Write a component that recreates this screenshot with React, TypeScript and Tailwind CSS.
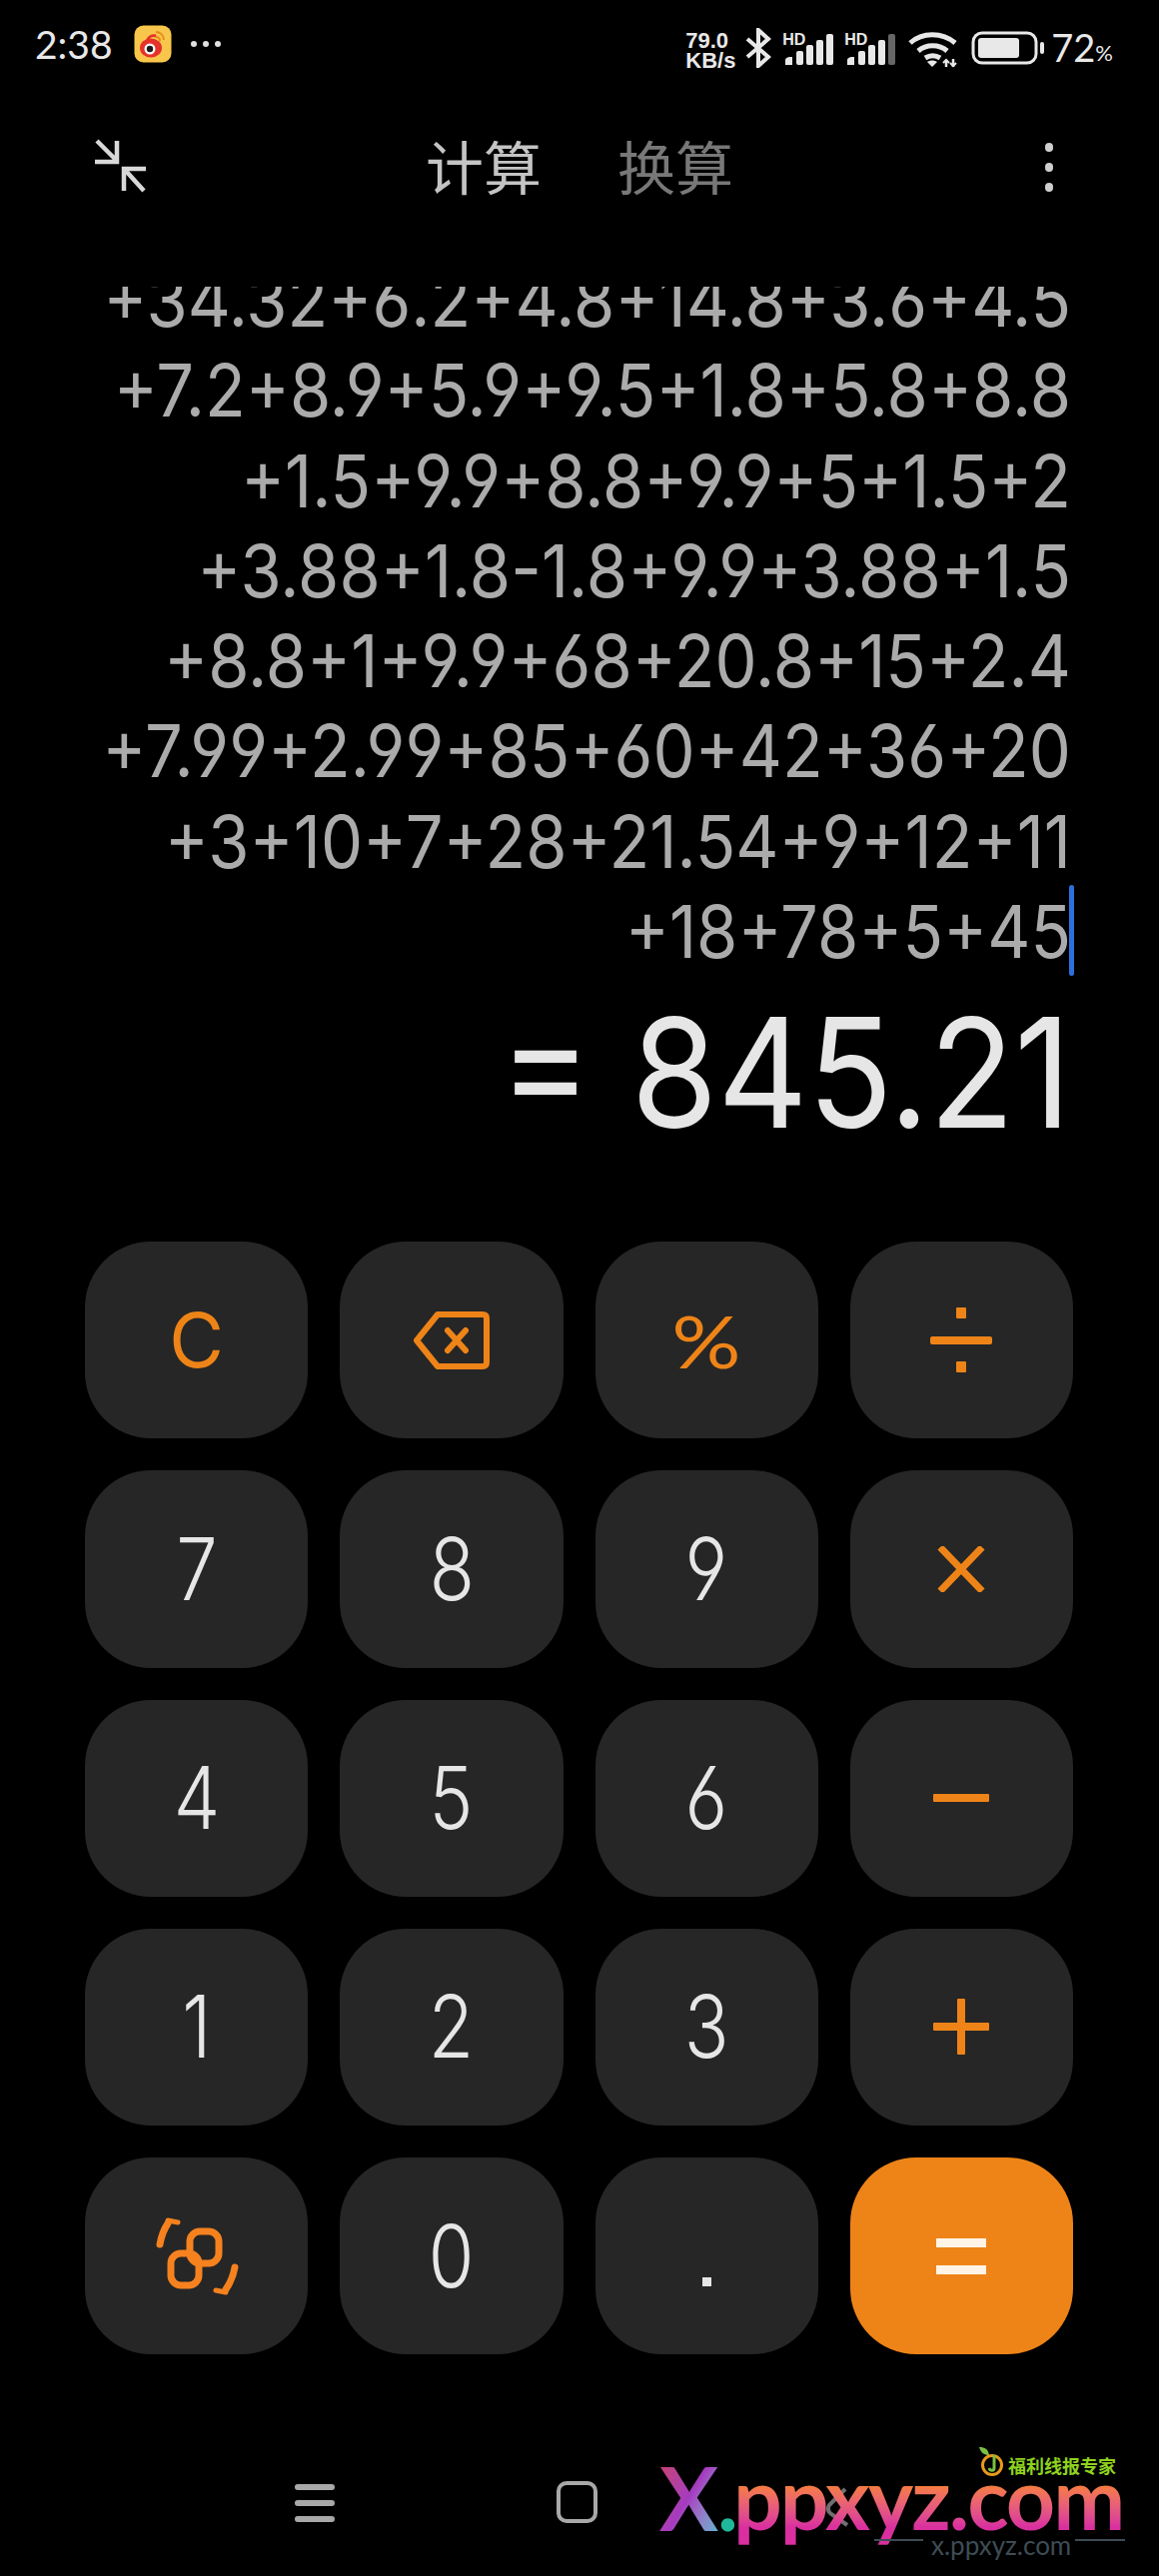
import React from "react";

const FONT = "font-['Lato','Noto_Sans',sans-serif]";
const NUM = "font-['Inter','Roboto',sans-serif] [font-feature-settings:'cv03','cv04']";

function Weibo() {
  return (
    <svg width="38" height="38" viewBox="0 0 38 38" className="ml-[19px]">
      <rect x="0.5" y="0.5" width="37" height="37" rx="9" fill="#f8c64b" />
      <ellipse cx="17" cy="23" rx="11" ry="9.5" fill="#e5322b" />
      <path d="M13 16c2-5 6-6 9-5" stroke="#e5322b" strokeWidth="3" fill="none" />
      <circle cx="16" cy="24" r="5.5" fill="#fff" />
      <circle cx="16" cy="24" r="3.2" fill="#1a1a1a" />
      <path d="M22 7c4 0 8 3 8 8" stroke="#e98a1d" strokeWidth="2" fill="none" />
      <path d="M22 12c2 0 4 1 4 4" stroke="#e98a1d" strokeWidth="2" fill="none" />
    </svg>
  );
}

function Signal({ dim }: { dim?: boolean }) {
  return (
    <div className="relative w-[52px] h-[44px]">
      <span className="absolute left-0 top-[11px] text-[16px] leading-[13px] font-bold text-[#e8e8e8] font-['Liberation_Sans',sans-serif]">HD</span>
      <svg width="52" height="44" viewBox="0 0 52 44" className="absolute left-0 top-0" fill="#e8e8e8">
        <path d="M3 43v-5q0-2 4-3h3v8z" />
        <rect x="14" y="29" width="7" height="14" rx="2" />
        <rect x="24" y="23" width="7" height="20" rx="2" />
        <rect x="34" y="18" width="7" height="25" rx="2" />
        <rect x="44" y="12" width="7" height="31" rx="2" fill={dim ? "#666666" : "#e8e8e8"} />
      </svg>
    </div>
  );
}

function StatusBar() {
  return (
    <div className={`h-[88px] flex items-center pl-[35px] pr-[46px] text-[#e8e8e8] ${FONT}`}>
      <span className="text-[39px] leading-none font-normal w-[80px]">2:38</span>
      <Weibo />
      <svg width="32" height="8" viewBox="0 0 32 8" className="ml-[18px]" fill="#e0e0e0">
        <circle cx="4" cy="4" r="3" />
        <circle cx="16" cy="4" r="3" />
        <circle cx="28" cy="4" r="3" />
      </svg>
      <div className="ml-auto flex items-center">
        <div className="flex flex-col w-[52px] text-[22px] leading-[20px] font-bold mt-[14px] font-['Liberation_Sans',sans-serif]">
          <span>79.0</span>
          <span>KB/s</span>
        </div>
        <svg width="26" height="40" viewBox="0 0 26 40" className="ml-[8px] mt-[8px]" fill="none" stroke="#e8e8e8" strokeWidth="4">
          <path d="M2 11l21 18-10 9V2l10 9L2 29" />
        </svg>
        <div className="ml-[11px]"><Signal /></div>
        <div className="ml-[10px]"><Signal dim /></div>
        <svg width="50" height="36" viewBox="0 0 50 36" className="ml-[12px] mt-[11px]" fill="none" stroke="#e8e8e8" strokeWidth="5">
          <path d="M2 11c12-11 32-11 45 0" />
          <path d="M10 19c8-7 21-7 29 0" />
          <path d="M17 26c5-3 10-3 15 0" />
          <path d="M24 35l-5-5c3-2 7-2 10 0z" fill="#e8e8e8" stroke="none" />
          <path d="M38 35v-7M45 35v-8" strokeWidth="2.5" />
          <path d="M35 31l3-3 3 3M42 31l3 3 3-3" strokeWidth="2" />
        </svg>
        <svg width="74" height="34" viewBox="0 0 74 34" className="ml-[13px] mt-[8px]">
          <rect x="2" y="2" width="63" height="30" rx="9" fill="none" stroke="#e8e8e8" strokeWidth="3" />
          <rect x="7" y="7" width="41" height="20" rx="3" fill="#e8e8e8" />
          <rect x="69" y="11" width="4" height="12" rx="2" fill="#e8e8e8" />
        </svg>
        <span className="ml-[6px] text-[38px] leading-none font-normal mt-[5px]">72</span>
        <span className="text-[22px] leading-none font-normal mt-[18px]">%</span>
      </div>
    </div>
  );
}

function Header() {
  return (
    <div className="h-[160px] px-[95px] flex items-center relative">
      <svg width="52" height="54" viewBox="0 0 52 54" fill="none" stroke="#d8d8d8" strokeWidth="4.5" className="mt-[-5px]">
        <path d="M2 2l20 20M22 2v21H0" />
        <path d="M49 52L30 31M29 52V30h22" />
      </svg>
      <div className="absolute left-[426px] top-[44px] flex gap-[76px] text-[58px] leading-[66px] font-['Noto_Sans_CJK_SC',sans-serif] font-normal">
        <span className="text-[#c4c4c4]">计算</span>
        <span className="text-[#787878]">换算</span>
      </div>
      <div className="ml-auto mr-[11px] flex flex-col gap-[11px] mt-[-1px]">
        <span className="w-[8px] h-[9px] rounded-full bg-[#cfcfcf]" />
        <span className="w-[8px] h-[9px] rounded-full bg-[#cfcfcf]" />
        <span className="w-[8px] h-[9px] rounded-full bg-[#cfcfcf]" />
      </div>
    </div>
  );
}

const LINES = [
  "+34.32+6.2+4.8+14.8+3.6+4.5",
  "+7.2+8.9+5.9+9.5+1.8+5.8+8.8",
  "+1.5+9.9+8.8+9.9+5+1.5+2",
  "+3.88+1.8-1.8+9.9+3.88+1.5",
  "+8.8+1+9.9+68+20.8+15+2.4",
  "+7.99+2.99+85+60+42+36+20",
  "+3+10+7+28+21.54+9+12+11",
  "+18+78+5+45",
];

function Display() {
  return (
    <div className={`relative h-[995px] pr-[88px] pt-[39px] text-right ${NUM}`}>
      <div className="h-[700px] overflow-hidden">
        <div className="-mt-[31px] text-[#ababab] text-[73px] leading-[90.3px] font-normal whitespace-nowrap">
          {LINES.map((l) => (
            <div key={l} className="origin-right scale-x-[0.915]">{l}</div>
          ))}
        </div>
      </div>
      <span className="absolute left-[1070px] top-[638px] w-[5px] h-[91px] rounded-sm bg-[#2f6fdc]" />
      <div className="flex justify-end items-center h-[150px] mt-[12px] text-[#e6e6e6]">
        <span className="text-[152px] leading-[150px] font-normal whitespace-nowrap origin-right scale-x-[0.92]">= 845.21</span>
      </div>
    </div>
  );
}

const KEY = "h-[197.25px] rounded-[66px] flex items-center justify-center";

function K({ children, cls = "" }: { children: React.ReactNode; cls?: string }) {
  return <div className={`${KEY} bg-[#262626] ${cls}`}>{children}</div>;
}

function D({ v }: { v: string }) {
  return (
    <K>
      <span className={`text-[86px] leading-none font-light text-[#e6e6e6] scale-x-[0.86] ${NUM}`}>{v}</span>
    </K>
  );
}

const O = "#ee8418";

function Keys() {
  return (
    <div className="pl-[85px] pr-[86px] grid grid-cols-4 gap-x-[32px] gap-y-[32px]">
      <K>
        <span className={`text-[75px] leading-none font-normal text-[#ee8418] ${NUM}`}>C</span>
      </K>
      <K>
        <svg width="76" height="58" viewBox="0 0 76 58" fill="none" stroke={O} strokeWidth="6" strokeLinejoin="round">
          <path d="M24 3h45q4 0 4 4v44q0 4-4 4H24L3 29z" />
          <path d="M34 19l18 20M52 19L34 39" strokeLinecap="round" />
        </svg>
      </K>
      <K>
        <span className={`text-[72px] leading-none font-normal text-[#ee8418] scale-x-[1.2] ${FONT}`}>%</span>
      </K>
      <K>
        <svg width="62" height="66" viewBox="0 0 62 66" fill={O}>
          <rect x="26" y="0" width="10" height="11" rx="1" />
          <rect x="0" y="29" width="62" height="8" rx="2" />
          <rect x="26" y="54" width="10" height="11" rx="1" />
        </svg>
      </K>
      <D v="7" />
      <D v="8" />
      <D v="9" />
      <K>
        <svg width="48" height="46" viewBox="0 0 48 46" fill="none" stroke={O} strokeWidth="7">
          <path d="M3 1l42 44M45 1L3 45" />
        </svg>
      </K>
      <D v="4" />
      <D v="5" />
      <D v="6" />
      <K>
        <svg width="56" height="8" viewBox="0 0 56 8" fill={O}>
          <rect width="56" height="8" rx="1" />
        </svg>
      </K>
      <D v="1" />
      <D v="2" />
      <D v="3" />
      <K>
        <svg width="56" height="56" viewBox="0 0 56 56" fill={O}>
          <rect y="24" width="56" height="8" rx="1" />
          <rect x="24" width="8" height="56" rx="1" />
        </svg>
      </K>
      <K>
        <svg width="84" height="78" viewBox="0 0 84 78" fill="none" stroke="#f5821f" strokeWidth="7" strokeLinecap="round" strokeLinejoin="round">
          <rect x="35" y="14" width="29" height="32" rx="10" />
          <rect x="16" y="36" width="28" height="32" rx="10" />
          <path d="M5 27Q7 15 13 6" />
          <path d="M13 3L23 5" strokeWidth="5" />
          <path d="M80 50Q78 62 71 72" />
          <path d="M71 75L61 73" strokeWidth="5" />
        </svg>
      </K>
      <D v="0" />
      <K>
        <span className="block w-[9px] h-[9px] bg-[#e6e6e6] mt-[52px]" />
      </K>
      <div className={`${KEY} bg-[#ee8418]`}>
        <svg width="50" height="36" viewBox="0 0 50 36" fill="#fff4e6">
          <rect width="50" height="9" />
          <rect y="27" width="50" height="9" />
        </svg>
      </div>
    </div>
  );
}

function NavBar() {
  return (
    <div className="relative h-[220px]">
      <div className="absolute left-[295px] top-[130px] flex flex-col gap-[10px]">
        <span className="w-[40px] h-[6px] rounded-sm bg-[#a8a8a8]" />
        <span className="w-[40px] h-[6px] rounded-sm bg-[#a8a8a8]" />
        <span className="w-[40px] h-[6px] rounded-sm bg-[#a8a8a8]" />
      </div>
      <div className="absolute left-[557px] top-[127px] w-[41px] h-[42px] rounded-[10px] border-[4px] border-[#a8a8a8]" />
    </div>
  );
}

function Watermark() {
  const grad = "bg-gradient-to-b from-[#f9812c] from-35% to-[#d92f9f] to-80% bg-clip-text text-transparent";
  return (
    <div className="absolute left-[660px] top-[2450px] w-[470px] h-[110px] font-['Lato','Liberation_Sans',sans-serif] font-bold">
      <svg width="24" height="30" viewBox="0 0 24 30" className="absolute left-[320px] top-[0px]">
        <path d="M0 0c6 0 9 2 10 8C5 8 2 6 0 0z" fill="#7ac143" />
        <circle cx="13" cy="18" r="9.5" fill="none" stroke="#e89a1c" strokeWidth="3" />
        <path d="M15 8v13c0 3-4 3-5 0" fill="none" stroke="#7ac143" strokeWidth="3" />
      </svg>
      <span className="absolute left-[349px] top-[6px] text-[18px] leading-[24px] whitespace-nowrap text-[#8ed21f] font-['Noto_Sans_CJK_SC',sans-serif] font-bold">福利线报专家</span>
      <span className="absolute left-0 top-[0px] text-[88px] leading-[100px] bg-gradient-to-br from-[#d23b5a] via-[#a63ac0] to-[#22c4d0] bg-clip-text text-transparent">X</span>
      <span className="absolute left-[58px] top-[0px] text-[88px] leading-[100px] text-[#1fb89a]">.</span>
      <svg width="26" height="40" viewBox="0 0 26 40" className="absolute left-[166px] top-[40px]" fill="none" stroke="#6f6f6f" strokeWidth="4">
        <path d="M20 2L4 18q-3 5 2 9l16 11" />
      </svg>
      <span className={`absolute left-[74px] top-[0px] text-[86px] leading-[100px] tracking-[-2px] whitespace-nowrap ${grad}`}>ppxyz.com</span>
      <span className="absolute left-[272px] top-[83px] text-[26px] leading-[30px] font-normal text-[#3e4c55]">x.ppxyz.com</span>
      <span className="absolute left-[215px] top-[92px] w-[49px] h-[2px] bg-[#3e4c55]" />
      <span className="absolute left-[416px] top-[92px] w-[50px] h-[2px] bg-[#3e4c55]" />
    </div>
  );
}

export default function App() {
  return (
    <div className="relative w-[1160px] h-[2579px] bg-black overflow-hidden">
      <StatusBar />
      <Header />
      <Display />
      <Keys />
      <NavBar />
      <Watermark />
    </div>
  );
}
